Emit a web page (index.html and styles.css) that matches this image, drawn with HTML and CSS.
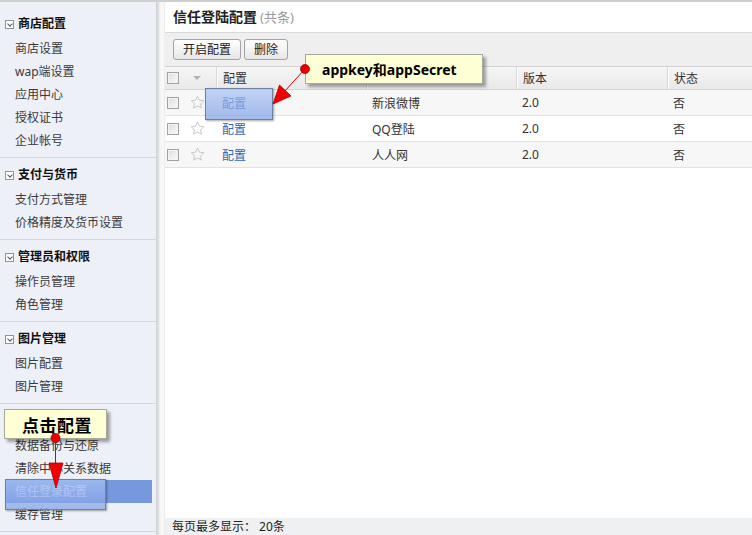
FILE: index.html
```html
<!DOCTYPE html>
<html lang="zh-CN">
<head>
<meta charset="utf-8">
<title>信任登陆配置</title>
<link rel="stylesheet" href="styles.css">
</head>
<body>
<div class="page">
  <aside class="sidebar">
    <div class="group">
      <div class="group-head"><span class="toggle"></span>商店配置</div>
      <div class="item">商店设置</div>
      <div class="item">wap端设置</div>
      <div class="item">应用中心</div>
      <div class="item">授权证书</div>
      <div class="item">企业帐号</div>
    </div>
    <div class="group">
      <div class="group-head"><span class="toggle"></span>支付与货币</div>
      <div class="item">支付方式管理</div>
      <div class="item">价格精度及货币设置</div>
    </div>
    <div class="group">
      <div class="group-head"><span class="toggle"></span>管理员和权限</div>
      <div class="item">操作员管理</div>
      <div class="item">角色管理</div>
    </div>
    <div class="group">
      <div class="group-head"><span class="toggle"></span>图片管理</div>
      <div class="item">图片配置</div>
      <div class="item">图片管理</div>
    </div>
    <div class="group">
      <div class="group-head"><span class="toggle"></span>数据管理</div>
      <div class="item">数据备份与还原</div>
      <div class="item">清除中心关系数据</div>
      <div class="item selected">信任登录配置</div>
      <div class="item">缓存管理</div>
    </div>
  </aside>
  <div class="divider"></div>
  <main class="main">
    <div class="title">信任登陆配置<span class="count">(共条)</span></div>
    <div class="toolbar">
      <button class="btn">开启配置</button>
      <button class="btn">删除</button>
    </div>
    <div class="table">
      <div class="row head">
        <div class="cell c-cb"><span class="cb"></span></div>
        <div class="cell c-star"><span class="sort"></span></div>
        <div class="cell col">配置</div>
        <div class="cell col">名称</div>
        <div class="cell col">版本</div>
        <div class="cell col">状态</div>
      </div>
      <div class="row odd">
        <div class="cell c-cb"><span class="cb"></span></div>
        <div class="cell c-star"><svg class="star" viewBox="0 0 16 16"><path d="M8 1.2l2.05 4.3 4.7.6-3.45 3.25.88 4.65L8 11.7l-4.18 2.3.88-4.65L1.25 6.1l4.7-.6z"/></svg></div>
        <div class="cell col"><a class="link">配置</a></div>
        <div class="cell col">新浪微博</div>
        <div class="cell col">2.0</div>
        <div class="cell col">否</div>
      </div>
      <div class="row">
        <div class="cell c-cb"><span class="cb"></span></div>
        <div class="cell c-star"><svg class="star" viewBox="0 0 16 16"><path d="M8 1.2l2.05 4.3 4.7.6-3.45 3.25.88 4.65L8 11.7l-4.18 2.3.88-4.65L1.25 6.1l4.7-.6z"/></svg></div>
        <div class="cell col"><a class="link">配置</a></div>
        <div class="cell col">QQ登陆</div>
        <div class="cell col">2.0</div>
        <div class="cell col">否</div>
      </div>
      <div class="row odd">
        <div class="cell c-cb"><span class="cb"></span></div>
        <div class="cell c-star"><svg class="star" viewBox="0 0 16 16"><path d="M8 1.2l2.05 4.3 4.7.6-3.45 3.25.88 4.65L8 11.7l-4.18 2.3.88-4.65L1.25 6.1l4.7-.6z"/></svg></div>
        <div class="cell col"><a class="link">配置</a></div>
        <div class="cell col">人人网</div>
        <div class="cell col">2.0</div>
        <div class="cell col">否</div>
      </div>
    </div>
    <div class="spacer"></div>
    <div class="footer">每页最多显示： 20条</div>
  </main>
</div>

<div class="hl hl-config"></div>
<div class="hl hl-side"></div>
<div class="callout callout-key">appkey和appSecret</div>
<div class="callout callout-click">点击配置</div>
<svg class="arrows" width="752" height="535" viewBox="0 0 752 535">
  <line x1="305" y1="67" x2="283" y2="91" stroke="#e00000" stroke-width="1"/>
  <polygon points="273,102 291,94 279.5,83" fill="#f00000" stroke="#b00000" stroke-width="0.8"/>
  <circle cx="305" cy="67" r="4.5" fill="#e80000" stroke="#a00000" stroke-width="0.8"/>
  <line x1="55.5" y1="436" x2="55.5" y2="462" stroke="#e00000" stroke-width="1"/>
  <polygon points="49,461 63,461 56,486" fill="#f00000" stroke="#b00000" stroke-width="0.8"/>
  <circle cx="55.5" cy="436" r="4.5" fill="#e80000" stroke="#a00000" stroke-width="0.8"/>
</svg>
</body>
</html>
```
FILE: styles.css
```css
* { box-sizing: border-box; }
html, body { margin: 0; padding: 0; }
body {
  width: 752px;
  height: 535px;
  overflow: hidden;
  position: relative;
  border-top: 2px solid #cfcfcf;
  background: #fff;
  font-family: "Noto Sans", "Noto Sans CJK SC", sans-serif;
  font-size: 12px;
  color: #333;
}
.page {
  display: flex;
  height: 533px;
}
.sidebar {
  width: 156px;
  flex: none;
  background: #eef0f7;
  padding-top: 5px;
}
.group {
  padding: 4px 0 5px;
  border-bottom: 1px solid #d3d6de;
}
.group-head {
  height: 26px;
  line-height: 26px;
  padding-left: 5px;
  font-weight: bold;
  color: #111;
  display: flex;
  align-items: center;
}
.toggle {
  width: 9px;
  height: 9px;
  border: 1px solid #8e939e;
  background: #fff;
  margin-right: 4px;
  position: relative;
}
.toggle::after {
  content: "";
  position: absolute;
  left: 1.5px;
  top: 1px;
  width: 3px;
  height: 3px;
  border-right: 1px solid #555;
  border-bottom: 1px solid #555;
  transform: rotate(45deg);
}
.item {
  height: 23px;
  line-height: 23px;
  padding-left: 15px;
  color: #3a3a3a;
}
.item.selected {
  background: #7699de;
  color: #dfe7fa;
  margin-left: 5px;
  padding-left: 10px;
  margin-right: 4px;
}
.divider {
  width: 9px;
  flex: none;
  background: linear-gradient(to right, #cdd0d8 0, #dcdcdc 2px, #f3f3f3 4px, #fbfbfb 7px, #e9e9e9 9px);
}
.main {
  flex: 1;
  display: flex;
  flex-direction: column;
  min-width: 0;
}
.title {
  height: 31px;
  line-height: 30px;
  padding-left: 8px;
  font-size: 14px;
  font-weight: bold;
  color: #222;
  border-bottom: 1px solid #d9d9d9;
}
.count {
  font-size: 13px;
  font-weight: normal;
  color: #999;
  margin-left: 3px;
}
.toolbar {
  height: 33px;
  padding: 6px 8px 0;
  background: #efefef;
  display: flex;
  gap: 3px;
  align-items: flex-start;
}
.btn {
  height: 21px;
  padding: 0 9px;
  border: 1px solid #a3a3a3;
  border-radius: 3px;
  background: linear-gradient(#ffffff, #e6e6e6);
  font-family: inherit;
  font-size: 12px;
  line-height: 19px;
  color: #222;
}
.table { border-top: 1px solid #d2d2d2; }
.row {
  display: grid;
  grid-template-columns: 20px 31px 150px 150px 151px 1fr;
  height: 26px;
  border-bottom: 1px solid #e2e2e2;
  background: #fff;
}
.row.odd { background: #f7f7f7; }
.row.head {
  height: 23px;
  background: linear-gradient(#f6f6f6, #e9e9e9);
  border-bottom: 1px solid #d4d4d4;
}
.cell {
  display: flex;
  align-items: center;
  white-space: nowrap;
  color: #333;
}
.col {
  padding-left: 6px;
}
.head .col { border-left: 1px solid #d6d6d6; box-shadow: inset 1px 0 0 #fff; }
.c-cb { padding-left: 2px; }
.c-star { justify-content: flex-start; padding-left: 5px; }
.cb {
  width: 12px;
  height: 12px;
  border: 1px solid #a2a2a2;
  background: linear-gradient(135deg, #dcdcdc, #fbfbfb);
  box-shadow: inset 0 0 0 1px #f4f4f4;
}
.sort {
  width: 0;
  height: 0;
  margin-left: 3px;
  border-left: 4px solid transparent;
  border-right: 4px solid transparent;
  border-top: 4px solid #b3b3b3;
}
.star {
  width: 15px;
  height: 15px;
  fill: none;
  stroke: #c4c4c4;
  stroke-width: 1;
}
.link { color: #2f66b5; }
.spacer { flex: 1; }
.footer {
  height: 17px;
  line-height: 18px;
  padding-left: 7px;
  background: #eef0f2;
  color: #222;
}
.hl {
  position: absolute;
  border: 1px solid #6f7f9f;
  background: linear-gradient(rgba(170, 196, 245, 0.7), rgba(125, 158, 228, 0.7));
  box-shadow: 1px 1px 2px rgba(0, 0, 0, 0.35);
}
.hl-config { left: 205px; top: 86px; width: 68px; height: 32px; }
.hl-side { left: 5px; top: 477px; width: 101px; height: 31px; }
.callout {
  position: absolute;
  background: #ffffd6;
  border: 1px solid #a9a99a;
  box-shadow: 3px 3px 3px rgba(0, 0, 0, 0.35);
  font-weight: bold;
  color: #000;
  display: flex;
  align-items: center;
  white-space: nowrap;
}
.callout-key {
  left: 305px; top: 52px; width: 178px; height: 30px;
  font-size: 14px;
  padding-left: 16px;
}
.callout-click {
  left: 4px; top: 407px; width: 103px; height: 30px;
  font-size: 17px;
  padding-left: 17px;
  letter-spacing: 0.5px;
}
.arrows {
  position: absolute;
  left: 0;
  top: 0;
  pointer-events: none;
}
```
